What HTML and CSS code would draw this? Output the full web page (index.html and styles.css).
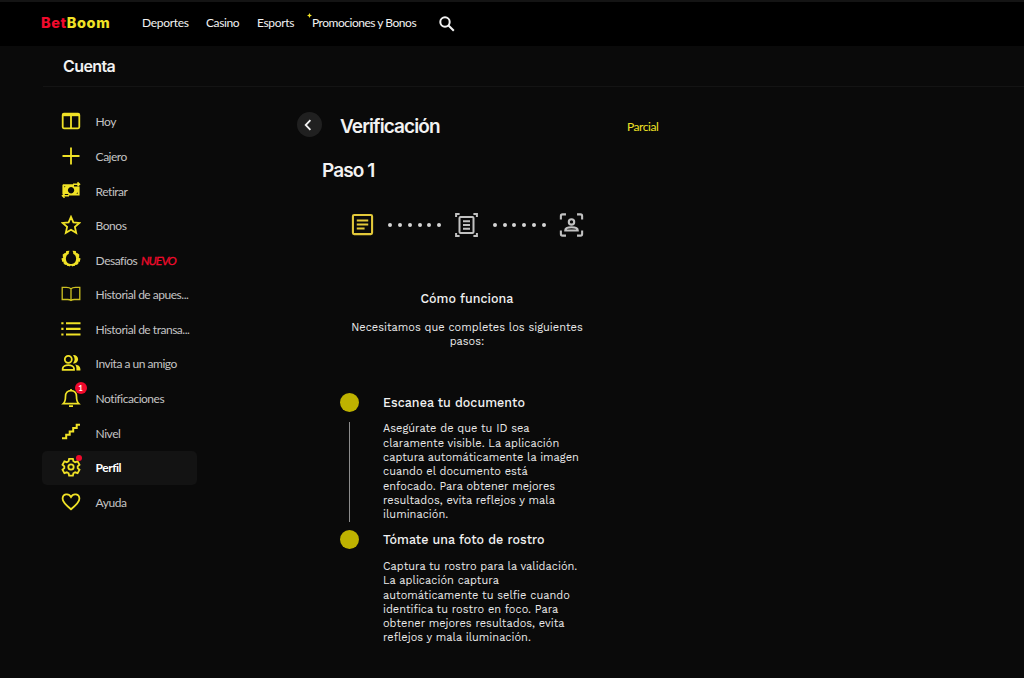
FILE: index.html
```html
<!DOCTYPE html>
<html lang="es">
<head>
    <meta charset="UTF-8">
    <meta name="viewport" content="width=device-width, initial-scale=1.0">
    <title>BetBoom - Verificación</title>
    <link rel="stylesheet" href="styles.css">
</head>
<body>
    <header class="topbar">
        <div class="logo"><span class="logo-red">Bet</span><span class="logo-yellow">Boom</span></div>
        <nav class="nav">
            <a class="nav-deportes">Deportes</a>
            <a class="nav-casino">Casino</a>
            <a class="nav-esports">Esports</a>
            <a class="nav-promo">Promociones y Bonos<svg class="spark" viewBox="0 0 6 6"><path d="M3 0l1 2 2 1-2 1-1 2-1-2-2-1 2-1z"/></svg></a>
        </nav>
        <svg class="search" viewBox="0 0 16 16"><circle cx="6" cy="6" r="4.7"/><path d="M9.5 9.5l5.3 5.3"/></svg>
    </header>
    <div class="account-bar"><h1>Cuenta</h1></div>

    <div class="layout">
        <ul class="menu">
            <li><span class="icon"><svg viewBox="0 0 20 20"><rect x="1.7" y="2.7" width="16.6" height="14.6" rx="1.2"/><path d="M10 4v13"/><path d="M2 3.7h16" stroke-width="3"/></svg></span><span class="label">Hoy</span></li>
            <li><span class="icon"><svg viewBox="0 0 20 20"><path d="M10 1.5v17M1.5 10h17"/></svg></span><span class="label">Cajero</span></li>
            <li><span class="icon"><svg viewBox="0 0 20 20"><path class="fill" fill-rule="evenodd" d="M2 4.2h11v2.2h5.6v9.2H7.2v-1.7H1.4V5.2zM10 7a3.2 3.2 0 1 0 .1 0zM3.2 6.2v1.3l1.4-1.3zM16.8 13.7v-1.4l-1.5 1.4z"/><path stroke-width="1.5" d="M12 4.3h6M16.5 2.4l2 1.9-2 1.9M8 15.8H2M3.5 13.9l-2 1.9 2 1.9"/></svg></span><span class="label">Retirar</span></li>
            <li><span class="icon"><svg viewBox="0 0 20 20"><path d="M10 1.8l2.4 5.5 6 .6-4.5 4 1.3 5.9L10 14.7l-5.2 3.1 1.3-5.9-4.5-4 6-.6z"/></svg></span><span class="label">Bonos</span></li>
            <li><span class="icon"><svg viewBox="0 0 20 20"><path stroke-width="2.6" d="M7.3 3.6C4.8 4.6 3.4 7 3.6 10c.2 3.4 2.6 5.7 5.6 6.2M12.7 3.6c2.5 1 3.9 3.4 3.7 6.4-.2 3.4-2.6 5.7-5.6 6.2"/><path class="fill" d="M8.5 1.8L5.2 2l-.5 2.8 2.4.5zM4 4L1.7 5.4l.2 3 2.4-.2zM3 8.5l-2.6 1 1 3.4 2.8-.4zM4 12.3l-1.9 1.5 2 2.1 2.2-1.2zM11.5 1.8l3.3.2.5 2.8-2.4.5zM16 4l2.3 1.4-.2 3-2.4-.2zM17 8.5l2.6 1-1 3.4-2.8-.4zM16 12.3l1.9 1.5-2 2.1-2.2-1.2zM7 15l-1 2h3l1-.6 1 .6h3l-1-2z"/></svg></span><span class="label">Desafíos <em>NUEVO</em></span></li>
            <li><span class="icon"><svg class="thin" viewBox="0 0 20 20"><path d="M10 4.8C9 3.7 7.3 3.3 5.5 3.3H1.2v12.2h5.4c1.6 0 2.6.3 3.4 1 .8-.7 1.8-1 3.4-1h5.4V3.3h-4.3c-1.8 0-3.5.4-4.5 1.5zM10 4.8v11.7"/></svg></span><span class="label">Historial de apues...</span></li>
            <li><span class="icon"><svg viewBox="0 0 20 20"><path stroke-width="2.1" d="M5 4.3h14.5M5 9.9h14.5M5 15.5h14.5M.3 4.3h2.2M.3 9.9h2.2M.3 15.5h2.2"/></svg></span><span class="label">Historial de transa...</span></li>
            <li><span class="icon"><svg viewBox="0 0 20 20"><circle cx="7.3" cy="6.3" r="3.5"/><path d="M1.7 16.8v-1.3c0-2.3 3-3.4 5.6-3.4s5.7 1.1 5.7 3.4v1.3z"/><path class="fill" d="M12 2.2a4.2 4.2 0 1 1 0 8.2 6 6 0 0 0 0-8.2zM14 11.6c3 .4 5.4 1.8 5.4 4.3v1.7h-4v-2.1c0-1.6-.4-2.9-1.4-3.9z"/></svg></span><span class="label">Invita a un amigo</span></li>
            <li><span class="icon"><svg viewBox="0 0 20 20"><path stroke-width="1.7" d="M2.3 15.6c1.7-1.6 2.2-3.2 2.2-7.1 0-3.6 2.3-5.9 5.5-5.9s5.5 2.3 5.5 5.9c0 3.9.5 5.5 2.2 7.1zM10 2.5V1M8 18.1h4"/></svg><b class="badge">1</b></span><span class="label">Notificaciones</span></li>
            <li><span class="icon"><svg viewBox="0 0 20 20"><path stroke-width="2" d="M1 16.3h4.2v-3.5h3.5V9.4h3.5V6h3.5V2.7H19"/></svg></span><span class="label">Nivel</span></li>
            <li class="active"><span class="icon"><svg viewBox="0 0 20 20"><path d="M8.1 1.8h3.8l.5 2.4 1.8 1 2.4-.8 1.9 3.3-1.8 1.6v1.9l1.8 1.6-1.9 3.3-2.4-.8-1.8 1-.5 2.4H8.1l-.5-2.4-1.8-1-2.4.8-1.9-3.3 1.8-1.6V9.3L1.5 7.7l1.9-3.3 2.4.8 1.8-1z"/><circle cx="10" cy="10" r="2.7"/></svg><b class="dot"></b></span><span class="label">Perfil</span></li>
            <li><span class="icon"><svg viewBox="0 0 20 20"><path d="M10 17.3C4.7 13 1.6 10 1.6 6.8c0-5 6.1-6 8.4-1.8 2.3-4.2 8.4-3.2 8.4 1.8 0 3.2-3.1 6.2-8.4 10.5z"/></svg></span><span class="label">Ayuda</span></li>
        </ul>

        <main class="verify">
            <div class="verify-head">
                <span class="back"><svg viewBox="0 0 10 14"><path d="M7.4 2.2L2.7 7l4.7 4.8"/></svg></span>
                <h2>Verificación</h2>
                <span class="status">Parcial</span>
            </div>
            <h3>Paso 1</h3>

            <div class="stepper">
                <svg class="step step-on" viewBox="0 0 24 24"><rect x="2.8" y="2.8" width="18.4" height="18.4" rx="1.2"/><path d="M6.5 8.2h11M6.5 12h11M6.5 15.9h7.5"/></svg>
                <div class="dots"><i></i><i></i><i></i><i></i><i></i><i></i></div>
                <svg class="step" viewBox="0 0 24 26"><path d="M1.6 5V2h3.5M18.9 2h3.5v3M22.4 21v3h-3.5M5.1 24H1.6v-3"/><rect x="5" y="5" width="14" height="16" rx="1"/><path d="M8.5 9.3h7M8.5 13h7M8.5 16.7h7"/></svg>
                <div class="dots"><i></i><i></i><i></i><i></i><i></i><i></i></div>
                <svg class="step" viewBox="0 0 24 24"><path d="M1.8 6.7V3.3q0-1.5 1.5-1.5h3.4M17.3 1.8h3.4q1.5 0 1.5 1.5v3.4M22.2 17.3v3.4q0 1.5-1.5 1.5h-3.4M6.7 22.2H3.3q-1.5 0-1.5-1.5v-3.4"/><circle cx="12" cy="9" r="2.6"/><path d="M6 17.2c0-2.1 3.2-3 6-3s6 .9 6 3z"/></svg>
            </div>

            <section class="intro">
                <h4>Cómo funciona</h4>
                <p>Necesitamos que completes los siguientes<br>pasos:</p>
            </section>

            <section class="timeline">
                <div class="entry">
                    <div class="rail"><span class="bullet"></span><span class="line"></span></div>
                    <div class="entry-body">
                        <h4>Escanea tu documento</h4>
                        <p>Asegúrate de que tu ID sea<br>claramente visible. La aplicación<br>captura automáticamente la imagen<br>cuando el documento está<br>enfocado. Para obtener mejores<br>resultados, evita reflejos y mala<br>iluminación.</p>
                    </div>
                </div>
                <div class="entry">
                    <div class="rail"><span class="bullet"></span></div>
                    <div class="entry-body">
                        <h4>Tómate una foto de rostro</h4>
                        <p>Captura tu rostro para la validación.<br>La aplicación captura<br>automáticamente tu selfie cuando<br>identifica tu rostro en foco. Para<br>obtener mejores resultados, evita<br>reflejos y mala iluminación.</p>
                    </div>
                </div>
            </section>
        </main>
    </div>
</body>
</html>
```
FILE: styles.css
```css
:root {
    --yellow: #f0e226;
    --red: #f00a2c;
    --bg: #0a0a0a;
}
* {
    box-sizing: border-box;
}
body {
    margin: 0;
    height: 678px;
    overflow: hidden;
    background: var(--bg);
    color: #f2f2f2;
    font-family: Lato, "Liberation Sans", sans-serif;
    white-space: nowrap;
}
h1, h2, h3, h4, p, ul {
    margin: 0;
    padding: 0;
}
svg {
    display: block;
    fill: none;
    stroke: currentColor;
    stroke-width: 1.8;
}
.topbar {
    display: flex;
    align-items: center;
    height: 46px;
    padding-left: 41px;
    background: #000;
    border-top: 2px solid #141414;
}
.logo {
    width: 101px;
    padding-bottom: 2px;
    font: 800 14.5px/20px Inter, sans-serif;
    letter-spacing: 0.6px;
}
.logo-red {
    color: var(--red);
}
.logo-yellow {
    color: var(--yellow);
}
.nav {
    display: flex;
    padding-bottom: 2px;
    font-size: 12px;
    line-height: 20px;
    letter-spacing: -0.48px;
}
.nav-deportes {
    width: 64px;
    letter-spacing: -0.3px;
}
.nav-casino {
    width: 51px;
    letter-spacing: -0.4px;
}
.nav-esports {
    width: 55px;
    letter-spacing: -0.35px;
}
.nav-promo {
    position: relative;
    width: 127px;
}
.spark {
    position: absolute;
    top: 0;
    left: -5px;
    width: 5px;
    height: 5px;
    fill: var(--yellow);
    stroke: none;
}
.search {
    width: 16px;
    height: 16px;
    margin-bottom: 1px;
    stroke-width: 2;
}
.account-bar {
    height: 41px;
    margin-left: 43px;
    padding-left: 20px;
    border-bottom: 1px solid #141414;
}
.account-bar h1 {
    font: 600 16px/41px Inter, sans-serif;
    letter-spacing: -0.6px;
}
.layout {
    display: flex;
    padding: 17.9px 0 0 42px;
}
.menu {
    width: 155px;
    list-style: none;
    color: #c4c4c4;
    font-size: 12px;
    letter-spacing: -0.48px;
}
.menu li {
    display: flex;
    align-items: center;
    height: 34.58px;
    padding-left: 18px;
    border-radius: 5px;
}
.menu .active {
    background: #131313;
    color: #fff;
    font-weight: 700;
}
.icon {
    position: relative;
    width: 20px;
    height: 20px;
    margin: -2px 15px 0 0.6px;
    color: var(--yellow);
}
.icon svg {
    width: 20px;
    height: 20px;
}
.icon .fill {
    fill: currentColor;
    stroke: none;
}
.icon .thin {
    stroke-width: 1.3;
    opacity: 0.85;
}
.label {
    padding-top: 0.4px;
    line-height: 18px;
}
.label em {
    color: var(--red);
    letter-spacing: -0.9px;
    margin-left: 1px;
    -webkit-text-stroke: 0.3px var(--red);
}
.badge {
    position: absolute;
    top: -6px;
    left: 14px;
    width: 12px;
    height: 12px;
    border-radius: 50%;
    background: var(--red);
    color: #fff;
    font-size: 8px;
    line-height: 12px;
    letter-spacing: 0;
    text-align: center;
}
.dot {
    position: absolute;
    top: -2px;
    left: 15px;
    width: 6px;
    height: 6px;
    border-radius: 50%;
    background: var(--red);
}
.verify {
    width: 480px;
    margin-left: 100px;
    padding-top: 7px;
}
.verify-head {
    display: flex;
    align-items: center;
    height: 26px;
}
.back {
    display: flex;
    align-items: center;
    justify-content: center;
    width: 25px;
    height: 25px;
    margin-right: 18px;
    border-radius: 50%;
    background: #202020;
}
.back svg {
    width: 10px;
    height: 14px;
    margin-left: -3px;
}
.verify-head h2 {
    width: 287px;
    padding-top: 4px;
    font: 600 19px/24px Inter, sans-serif;
    letter-spacing: -0.9px;
}
.status {
    padding-top: 3px;
    color: var(--yellow);
    font-size: 12px;
    letter-spacing: -0.45px;
}
.verify h3 {
    margin: 21px 0 0 25px;
    font: 600 19px/24px Inter, sans-serif;
    letter-spacing: -0.9px;
}
.stepper {
    display: flex;
    align-items: center;
    justify-content: space-between;
    width: 234px;
    height: 28px;
    margin: 28px 0 0 53px;
}
.step {
    width: 25px;
    height: 26px;
    color: #c2c2c2;
    stroke-width: 2;
}
.step-on {
    width: 25px;
    height: 25px;
    color: #e3c93a;
}
.dots {
    display: flex;
    gap: 5.8px;
}
.dots i {
    width: 4px;
    height: 4px;
    border-radius: 50%;
    background: #d6d6d6;
}
.intro,
.timeline {
    font-family: "Work Sans", Inter, sans-serif;
}
.intro {
    width: 260px;
    margin: 50px 0 0 40px;
    text-align: center;
}
.verify h4 {
    font-size: 12.5px;
    font-weight: 500;
    line-height: 20px;
    letter-spacing: 0.04px;
}
.verify p {
    color: #eaeaea;
    font-size: 11px;
    line-height: 14.3px;
    letter-spacing: 0.02px;
}
.intro p {
    margin-top: 12px;
}
.timeline {
    margin: 43.4px 0 0 43px;
}
.entry {
    display: flex;
    height: 137.5px;
}
.rail {
    display: flex;
    flex-direction: column;
    align-items: center;
    width: 19px;
    margin-right: 24px;
}
.bullet {
    width: 19px;
    height: 19px;
    border-radius: 50%;
    background: #beb200;
}
.line {
    width: 1px;
    height: 100px;
    margin-top: 10px;
    background: #8c8c8c;
}
.entry-body p {
    margin-top: 9.6px;
}
```
